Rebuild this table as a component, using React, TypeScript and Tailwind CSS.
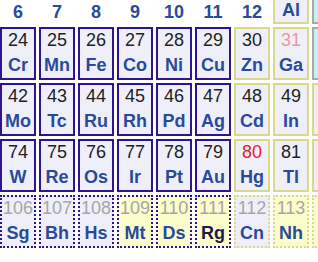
import React from "react";

type Kind = "tm" | "pt" | "ml";
type Cell = {
  n?: string;
  s?: string;
  kind: Kind;
  dotted?: boolean;
  yellowFill?: boolean;
  numColor?: string;
  symColor?: string;
};

const borderByKind: Record<Kind, string> = {
  tm: "border-[#2e1490]",
  pt: "border-[#d9d98a]",
  ml: "border-[#9ab0a8]",
};

const rows: Cell[][] = [
  [
    { n: "24", s: "Cr", kind: "tm" },
    { n: "25", s: "Mn", kind: "tm" },
    { n: "26", s: "Fe", kind: "tm" },
    { n: "27", s: "Co", kind: "tm" },
    { n: "28", s: "Ni", kind: "tm" },
    { n: "29", s: "Cu", kind: "tm" },
    { n: "30", s: "Zn", kind: "pt" },
    { n: "31", s: "Ga", kind: "pt", numColor: "text-[#e89a9a]" },
    { kind: "ml" },
  ],
  [
    { n: "42", s: "Mo", kind: "tm" },
    { n: "43", s: "Tc", kind: "tm" },
    { n: "44", s: "Ru", kind: "tm" },
    { n: "45", s: "Rh", kind: "tm" },
    { n: "46", s: "Pd", kind: "tm" },
    { n: "47", s: "Ag", kind: "tm" },
    { n: "48", s: "Cd", kind: "pt" },
    { n: "49", s: "In", kind: "pt" },
    { kind: "pt" },
  ],
  [
    { n: "74", s: "W", kind: "tm" },
    { n: "75", s: "Re", kind: "tm" },
    { n: "76", s: "Os", kind: "tm" },
    { n: "77", s: "Ir", kind: "tm" },
    { n: "78", s: "Pt", kind: "tm" },
    { n: "79", s: "Au", kind: "tm" },
    { n: "80", s: "Hg", kind: "pt", numColor: "text-[#e6202c]" },
    { n: "81", s: "Tl", kind: "pt" },
    { kind: "pt" },
  ],
  [
    { n: "106", s: "Sg", kind: "tm", dotted: true },
    { n: "107", s: "Bh", kind: "tm", dotted: true },
    { n: "108", s: "Hs", kind: "tm", dotted: true },
    { n: "109", s: "Mt", kind: "tm", dotted: true, yellowFill: true },
    { n: "110", s: "Ds", kind: "tm", dotted: true, yellowFill: true },
    { n: "111", s: "Rg", kind: "tm", dotted: true, yellowFill: true, symColor: "text-[#1a1a4e]" },
    { n: "112", s: "Cn", kind: "pt", dotted: true },
    { n: "113", s: "Nh", kind: "pt", dotted: true, yellowFill: true },
    { kind: "pt", dotted: true, yellowFill: true },
  ],
];

function ElementCell({ c }: { c: Cell }) {
  const fill =
    c.kind === "ml" ? "bg-[#cdeef0]" : c.yellowFill ? "bg-[#fdfccb]" : "bg-[#efeffa]";
  const numColor = c.numColor ?? (c.dotted ? "text-[#a6a6a6]" : "text-[#222222]");
  const symColor = c.symColor ?? "text-[#2a4a9c]";
  return (
    <div
      className={`h-[53px] w-[36px] border-2 ${c.dotted ? "border-dotted" : "border-solid"} ${
        borderByKind[c.kind]
      } ${fill} flex flex-col items-center pt-[1px]`}
    >
      {c.n && (
        <div className={`text-[18px] leading-[20px] ${numColor} whitespace-nowrap`}>{c.n}</div>
      )}
      {c.s && (
        <div className={`mt-[4px] text-[18px] leading-[22px] font-bold ${symColor}`}>{c.s}</div>
      )}
    </div>
  );
}

export default function App() {
  const headers = ["6", "7", "8", "9", "10", "11", "12"];
  return (
    <div
      className="w-[318px] h-[262px] overflow-hidden bg-white"
      style={{ fontFamily: '"Liberation Sans", Arial, sans-serif' }}
    >
      <div className="grid grid-cols-[repeat(9,36px)] grid-rows-[24px_53px_53px_53px_53px] gap-x-[3px] gap-y-[3px] w-[348px]">
        {headers.map((h) => (
          <div
            key={h}
            className="h-[24px] flex items-start justify-center pt-[2px] text-[18px] leading-[20px] font-bold text-[#2a4a9c]"
          >
            {h}
          </div>
        ))}
        <div className="h-[24px] border-2 border-t-0 border-[#d9d98a] bg-[#efeffa] flex justify-center">
          <div className="text-[18px] leading-[20px] font-bold text-[#2a4a9c]">Al</div>
        </div>
        <div className="h-[24px] border-2 border-t-0 border-[#9ab0a8] bg-[#cdeef0]"></div>
        {rows.map((r, i) =>
          r.map((c, j) => <ElementCell key={`${i}-${j}`} c={c} />)
        )}
      </div>
    </div>
  );
}
